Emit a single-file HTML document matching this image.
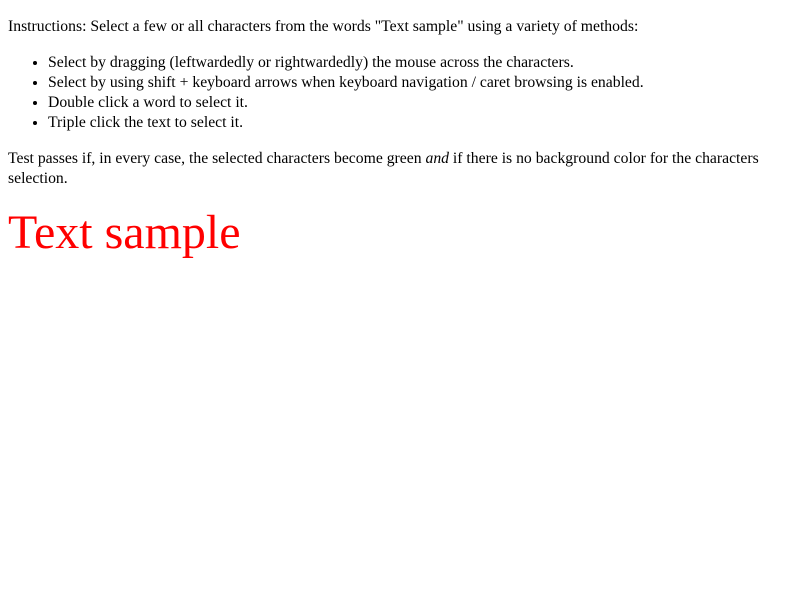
<!DOCTYPE html>
<html><head><style>
body{margin:8px;position:relative;top:1px;font-family:"Liberation Serif",serif;font-size:15.7px;line-height:20px;color:#000;background:#fff}
p{margin:16px 0}
ul{margin:16px 0;padding-left:40px}
.s{color:red;font-size:48px;line-height:56px;margin:16px 0 0}
</style></head><body>
<p>Instructions: Select a few or all characters from the words "Text sample" using a variety of methods:</p>
<ul>
<li>Select by dragging (leftwardedly or rightwardedly) the mouse across the characters.</li>
<li>Select by using shift + keyboard arrows when keyboard navigation / caret browsing is enabled.</li>
<li>Double click a word to select it.</li>
<li>Triple click the text to select it.</li>
</ul>
<p>Test passes if, in every case, the selected characters become green <em>and</em> if there is no background color for the characters selection.</p>
<div class="s">Text sample</div>
</body></html>
